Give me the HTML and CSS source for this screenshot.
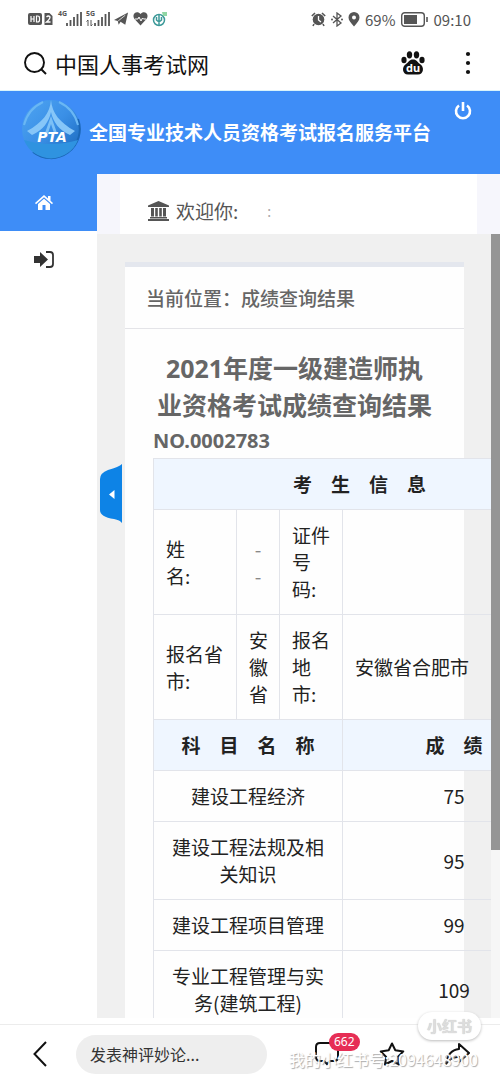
FILE: index.html
```html
<!DOCTYPE html>
<html lang="zh-CN">
<head>
<meta charset="utf-8">
<meta name="viewport" content="width=device-width, initial-scale=1">
<title>中国人事考试网</title>
<link rel="stylesheet" href="styles.css">
</head>
<body>
<div class="app">
  <div class="status">
    <div class="status-left">
      <svg width="26" height="14" viewBox="0 0 26 14"><rect x="0" y="1" width="14" height="12" rx="2" fill="#555"/><path d="M3 4v6M6 4v6M3 7h3M8.500 4v6h1q2 0 2-2V6q0-2-2-2z" stroke="#fff" stroke-width="1.200" fill="none"/><path d="M16.500 1h5l3 3v9h-8z" fill="#555"/><path d="M18.500 5q2-2 3.500 0 0 2-3.500 5h4" stroke="#fff" stroke-width="1.300" fill="none"/></svg>
      <div class="signal"><span>4G</span><svg width="24" height="16" viewBox="0 0 24 16"><path d="M9 15v-3M12.500 15V9M16 15V6M19.500 15V3M23 15V1" stroke="#555" stroke-width="1.800"/></svg></div>
      <div class="signal"><span>5G</span><svg width="24" height="16" viewBox="0 0 24 16"><path d="M2 15V9M.500 10.500L2 9M5 9v6M6.500 13.500L5 15" stroke="#555" fill="none"/><path d="M9 15v-3M12.500 15V9M16 15V6M19.500 15V3M23 15V1" stroke="#555" stroke-width="1.800"/></svg></div>
      <svg width="15" height="14" viewBox="0 0 16 14"><path d="M0 8L15 0l-3 13-5-3-2 3-1-4zM5 9l7-6-5 7" fill="#555"/><path d="M4.500 9L12 3" stroke="#fff" stroke-width=".8"/></svg>
      <svg width="15" height="14" viewBox="0 0 15 14"><path d="M7.500 13.500L1.500 7C-2 2 4-2 7.500 2 11-2 17 2 13.500 7z" fill="#555"/><path d="M2 7h3l1-2 2 4 1.500-3 1 1H13" stroke="#fff" fill="none"/></svg>
      <svg width="16" height="16" viewBox="0 0 16 16"><circle cx="7" cy="9" r="5.500" fill="none" stroke="#3d9999" stroke-width="1.500"/><path d="M7 4v10M4.500 6v3q2.500 3 5 0V6" stroke="#3d9999" stroke-width="1.500" fill="none"/><path d="M10 1h5v4h-4z" fill="#90d6a4"/></svg>
    </div>
    <div class="status-right">
      <svg width="15" height="15" viewBox="0 0 15 15"><circle cx="7.500" cy="7.500" r="5.800" fill="#555"/><path d="M.8 4L4 1M14.200 4L11 1M3 12l-1 2M12 12l1 2" stroke="#555" stroke-width="1.600"/><path d="M7.500 4v4l2.500 2" stroke="#fff" stroke-width="1.300" fill="none"/></svg>
      <svg width="12" height="15" viewBox="0 0 12 15"><path d="M2 4l8 7-4 3V1l4 3-8 7" stroke="#555" stroke-width="1.300" fill="none"/><circle cx="1" cy="7.500" r="1" fill="#555"/><circle cx="11" cy="7.500" r="1" fill="#555"/></svg>
      <svg width="12" height="15" viewBox="0 0 12 15"><path d="M6 14.500C3 11 .5 8.500.5 5.500a5.500 5.500 0 0 1 11 0c0 3-2.500 5.500-5.500 9z" fill="#555"/><circle cx="6" cy="5.500" r="2" fill="#fff"/></svg>
      <span>69%</span>
      <svg width="28" height="15" viewBox="0 0 28 15"><rect x=".7" y=".7" width="22.600" height="13.600" rx="3" fill="none" stroke="#555" stroke-width="1.400"/><rect x="3" y="3" width="13" height="9" fill="#555"/><path d="M26 5v5" stroke="#555" stroke-width="1.600"/></svg>
      <span>09:10</span>
    </div>
  </div>
  <div class="search">
    <svg width="23" height="23" viewBox="0 0 23 23"><circle cx="10.500" cy="10.500" r="9.500" fill="none" stroke="#111" stroke-width="1.900"/><path d="M17 17l5 5" stroke="#111" stroke-width="1.900"/></svg>
    <span class="site">中国人事考试网</span>
    <button class="plain" aria-label="百度"><svg width="24" height="24" viewBox="0 0 24 24" fill="#111"><ellipse cx="3" cy="9" rx="2.600" ry="3.200"/><ellipse cx="8.500" cy="3.800" rx="2.700" ry="3.600"/><ellipse cx="15.500" cy="3.800" rx="2.700" ry="3.600"/><ellipse cx="21" cy="9" rx="2.600" ry="3.200"/><path d="M12 8.500c4 0 4 2.500 7 4.500 4.500 2.500 4 10.500-2 10.500H7c-6 0-6.500-8-2-10.500 3-2 3-4.500 7-4.500z"/><text class="du" x="12" y="21" text-anchor="middle">du</text></svg></button>
    <button class="plain" aria-label="更多"><svg width="6" height="24" viewBox="0 0 6 24" fill="#111"><circle cx="3" cy="3" r="2.100"/><circle cx="3" cy="12" r="2.100"/><circle cx="3" cy="21" r="2.100"/></svg></button>
  </div>
  <header class="banner">
    <svg width="60" height="62" viewBox="0 0 60 62">
      <defs><linearGradient id="globe" x1="0" y1="0" x2="1" y2="1"><stop offset="0" stop-color="#4fa5f2"/><stop offset=".5" stop-color="#3a8fe6"/><stop offset="1" stop-color="#1765b8"/></linearGradient></defs>
      <circle cx="30" cy="30" r="29" fill="url(#globe)"/>
      <path d="M57 20A29 29 0 0 1 12 53" fill="none" stroke="#1a66b5" stroke-width="2"/>
      <path d="M3 41q27 8 54 0a29 29 0 0 1-54 0z" fill="#2f93e0"/>
      <path d="M30 1C29 14 21 24 6 32l5 4C22 31 28 23 30 13c2 10 8 18 19 23l5-4C39 24 31 14 30 1z" fill="#86c6f8"/>
      <path d="M30 17l-6 17h3l3-9 3 9h3z" fill="#7cc0f6"/>
      <path d="M22 3Q7 10 3 26M38 3q15 7 19 23" fill="none" stroke="#6ab7f4" stroke-width="2"/>
      <text class="pta" x="31" y="43" text-anchor="middle">PTA</text>
    </svg>
    <h1>全国专业技术人员资格考试报名服务平台</h1>
    <button class="plain power" aria-label="退出"><svg width="18" height="20" viewBox="0 0 18 20"><path d="M5 4.500a7 7 0 1 0 8 0M9 1v9" fill="none" stroke="#fff" stroke-width="2.600"/></svg></button>
  </header>
  <div class="body">
    <nav class="side">
      <a class="side-item active" href="#" aria-label="首页"><svg width="18" height="16" viewBox="0 0 18 16" fill="#fff"><path d="M0 8l9-8 4 3.500V1h2.500v4.800L18 8l-1 1.200-8-7-8 7z"/><path d="M3 9l6-5.200L15 9v6h-4.500v-5h-3v5H3z"/></svg></a>
      <a class="side-item" href="#" aria-label="登录"><svg width="20" height="17" viewBox="0 0 20 17"><path d="M0 5h6V1l8 7.500L6 16v-4H0z" fill="#333"/><path d="M12 1h4q3 0 3 3v9q0 3-3 3h-4" fill="none" stroke="#333" stroke-width="1.800"/></svg></a>
    </nav>
    <main class="main">
      <div class="welcome-wrap"><div class="welcome">
        <svg width="21" height="20" viewBox="0 0 21 20" fill="#555"><path d="M10.500 0L21 4.500V6H0V4.500zM2 16h17v1.500H2zM0 18h21v2H0zM3 7h3v8.500H3zM7.200 7h2.600v8.500H7.200zM11.200 7h2.600v8.500h-2.600zM15 7h3v8.500h-3z"/></svg>
        <span>欢迎你:</span><span class="faint">:</span>
      </div></div>
      <div class="frame">
        <button class="collapse" aria-label="收起"><svg width="22" height="59" viewBox="0 0 22 59"><path d="M22 0v59q-2-3-8-4Q0 53 0 46V15Q0 9 8 6 19 3 22 0z" fill="#0d83e6"/><path d="M14.500 26v9L9 30.500z" fill="#fff"/></svg></button>
        <section class="panel">
          <div class="crumb">当前位置：成绩查询结果</div>
          <div class="result">
            <h2>2021年度一级建造师执业资格考试成绩查询结果</h2>
            <p class="number">NO.0002783</p>
            <table>
              <colgroup><col class="c1"><col class="c2"><col class="c3"><col class="c4"></colgroup>
              <tr><th colspan="4">考　生　信　息</th></tr>
              <tr><td>姓<br>名:</td><td class="masked">-<br>-</td><td>证件<br>号<br>码:</td><td></td></tr>
              <tr><td>报名省市:</td><td>安徽省</td><td>报名地<br>市:</td><td>安徽省合肥市</td></tr>
              <tr><th colspan="3">科　目　名　称</th><th>成　绩</th></tr>
              <tr class="score"><td colspan="3">建设工程经济</td><td>75</td></tr>
              <tr class="score"><td colspan="3">建设工程法规及相关知识</td><td>95</td></tr>
              <tr class="score"><td colspan="3">建设工程项目管理</td><td>99</td></tr>
              <tr class="score"><td colspan="3">专业工程管理与实务(建筑工程)</td><td>109</td></tr>
            </table>
          </div>
        </section>
        <div class="track"><div class="thumb"></div></div>
      </div>
    </main>
  </div>
  <footer class="foot">
    <button class="plain" aria-label="返回"><svg width="14" height="26" viewBox="0 0 14 26"><path d="M13 1L1.500 13 13 25" fill="none" stroke="#111" stroke-width="2"/></svg></button>
    <input class="comment" type="text" aria-label="评论" placeholder="发表神评妙论...">
    <div class="actions">
      <button class="plain chat" aria-label="评论列表"><svg width="24" height="24" viewBox="0 0 24 24"><path d="M5 1h14q4 0 4 4v10q0 4-4 4h-4l-3 3-3-3H5q-4 0-4-4V5q0-4 4-4z" fill="none" stroke="#111" stroke-width="2"/></svg><span class="badge">662</span></button>
      <button class="plain" aria-label="收藏"><svg width="26" height="24" viewBox="0 0 26 24"><path d="M13 1.500l3.300 6.700 8 1.200-5.500 5.600 1.200 7.500-7-3.500-7 3.500L7.200 15 1.700 9.400l8-1.200z" fill="none" stroke="#111" stroke-width="2" stroke-linejoin="round"/></svg></button>
      <button class="plain" aria-label="分享"><svg width="26" height="24" viewBox="0 0 26 24"><path d="M14 2l10 9-10 9v-5Q6 14 1 22 3 8 14 7z" fill="none" stroke="#111" stroke-width="2" stroke-linejoin="round"/></svg></button>
    </div>
    <span class="mark-logo">小红书</span>
    <span class="mark-id">我的小红书号:2094648900</span>
  </footer>
</div>
</body>
</html>
```
FILE: styles.css
```css
* { box-sizing: border-box; }
body { margin: 0; font-family: "Noto Sans", "Noto Sans CJK SC", sans-serif; color: #222; background: #fff; }
h1, h2, p { margin: 0; }
svg { display: block; flex: none; }
.plain { border: 0; padding: 0; background: none; }
.app { display: flex; flex-direction: column; height: 100vh; overflow: hidden; }
.status { display: flex; justify-content: space-between; align-items: center; height: 38px; padding: 0 29px 0 28px; flex: none; color: #555; font: 15px "Noto Sans CJK SC", sans-serif; }
.status-left { display: flex; align-items: center; gap: 4px; }
.status-right { display: flex; align-items: center; gap: 5px; }
.signal { position: relative; }
.signal span { position: absolute; left: 0; top: -2px; font: bold 7px "Noto Sans", sans-serif; }
.search { display: flex; align-items: center; height: 53px; padding: 0 29px 2px 24px; flex: none; border-bottom: 1px solid #d9f3fb; }
.site { flex: 1; margin-left: 8px; font: 22px/32px "Noto Sans CJK SC", sans-serif; color: #111; }
.search .plain + .plain { margin-left: 40px; }
.du { fill: #fff; font: bold 11px "Noto Sans", sans-serif; }
.banner { display: flex; align-items: center; flex: none; height: 83px; padding: 0 28px 6px 21px; background: #3e8df7; color: #fff; }
.pta { fill: #fff; font: italic bold 14px "DejaVu Sans", sans-serif; }
.banner h1 { flex: 1; margin-left: 8px; padding-top: 4px; font: bold 19px "Noto Sans CJK SC", sans-serif; white-space: nowrap; }
.power { align-self: flex-start; margin-top: 10px; }
.body { display: flex; flex: 1; min-height: 0; }
.side { flex: none; width: 97px; }
.side-item { display: flex; align-items: center; justify-content: center; height: 57px; padding-right: 9px; }
.side-item.active { background: #3e8df7; }
.main { display: flex; flex-direction: column; flex: 1; min-width: 0; padding-bottom: 6px; }
.welcome-wrap { flex: none; padding: 0 23px; background: #f6f6fc; }
.welcome { display: flex; align-items: center; gap: 7px; height: 60px; padding: 13px 28px 0; background: #fff; font: 19px "Noto Sans CJK SC", sans-serif; color: #555; }
.faint { margin-left: 22px; font-size: 14px; color: #aaa; }
.frame { position: relative; flex: 1; min-height: 0; overflow: hidden; padding: 28px 36px 0 28px; background: #f0f0f0; }
.panel { min-height: 100%; background: #fefefe; border-top: 5px solid #e4e7ee; }
.crumb { padding: 16px 21px; border-bottom: 1px solid #e4e4e8; font: 500 19px/29px "Noto Sans CJK SC", sans-serif; color: #666; }
.result { padding: 21px 28px; }
h2 { padding: 0 4px; font: bold 25px/37px "Noto Sans", "Noto Sans CJK SC", sans-serif; text-align: center; color: #666; }
.number { font: bold 20px/34px "Noto Sans", sans-serif; color: #666; }
table { width: 413px; table-layout: fixed; border-collapse: collapse; font-size: 19px; line-height: 27px; }
.c1 { width: 83px; }
.c2 { width: 43px; }
.c3 { width: 63px; }
td, th { padding: 11px 12px 12px; border: 1px solid #e2e4ea; font-family: "Noto Sans CJK SC", sans-serif; }
td { text-align: left; }
th { background: #eff6ff; text-align: center; }
.score td { text-align: center; }
.masked { text-align: center; color: #888; }
.collapse { position: absolute; left: 3px; top: 230px; border: 0; padding: 0; background: none; }
.track { position: absolute; top: 0; right: 0; bottom: 0; width: 9px; background: #f6f6f6; }
.thumb { height: 616px; background: #959595; }
.foot { position: relative; display: flex; align-items: center; flex: none; height: 59px; padding: 0 29px 0 33px; border-top: 1px solid #ececec; }
.comment { flex: 1; min-width: 0; height: 39px; margin: 0 48px 0 29px; padding: 0 14px; border: 0; border-radius: 20px; background: #eee; font: 16px "Noto Sans CJK SC", sans-serif; }
.comment::placeholder { color: #333; opacity: 1; }
.actions { display: flex; gap: 40px; }
.chat { position: relative; }
.badge { position: absolute; left: 14px; top: -9px; height: 18px; padding: 0 5px; border-radius: 9px; background: #e62e55; color: #fff; font: 12px/18px "Noto Sans", sans-serif; }
.mark-logo { position: absolute; right: 19px; top: -13px; padding: 0 9px; border-radius: 15px; background: #fff; box-shadow: 0 1px 3px #bbb; color: #ddd; font: bold 15px/28px "Noto Sans CJK SC", sans-serif; text-shadow: 0 0 1px #bbb; }
.mark-id { position: absolute; right: 22px; bottom: 12px; color: #fff; font: 16px/24px "Noto Sans CJK SC", sans-serif; text-shadow: 1px 1px 1px #aaa; white-space: nowrap; }
```
